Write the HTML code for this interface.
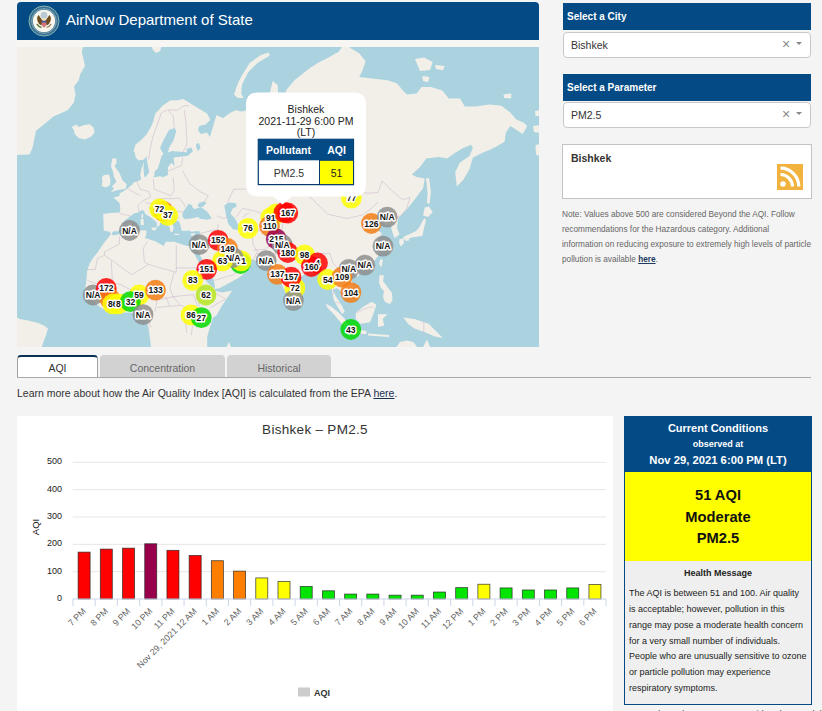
<!DOCTYPE html><html><head><meta charset="utf-8"><style>
*{margin:0;padding:0;box-sizing:border-box}
html,body{width:822px;height:711px;overflow:hidden;background:#f4f4f4;font-family:"Liberation Sans",sans-serif;color:#333;position:relative}
.abs{position:absolute}
.hdr{left:17px;top:2px;width:522px;height:38px;background:#044b86;border-radius:4px 4px 0 0}
.hdr .t{position:absolute;left:49px;top:9px;font-size:15px;color:#fff;line-height:18px;white-space:nowrap}
.ph{left:563px;width:248px;height:27px;background:#044b86;color:#fff;font-weight:bold;font-size:10px;padding-left:4px;line-height:27px}
.sel{left:563px;width:248px;height:26px;background:#fff;border:1px solid #c8c8c8;border-radius:4px;font-size:10.5px;line-height:24px;padding-left:7px;color:#333}
.sel .x{position:absolute;left:218px;top:-1.5px;font-size:14px;color:#888}
.sel .ar{position:absolute;left:232px;top:9px;width:0;height:0;border-left:3.5px solid transparent;border-right:3.5px solid transparent;border-top:3.5px solid #888}
.info{left:562px;top:144px;width:250px;height:55px;background:#fff;border:1px solid #c3c3c3}
.note{left:562px;top:206.7px;width:256px;font-size:8.25px;line-height:15px;color:#666;white-space:nowrap}
.tab{top:355px;height:22px;border-radius:4px 4px 0 0;font-size:10.5px;text-align:center;line-height:26px;color:#666;background:#d2d2d2}
.learn{left:17px;top:385.8px;font-size:10.5px;color:#333;white-space:nowrap;line-height:14px}
.chart{left:17px;top:416px;width:596px;height:295px;background:#fff}
.cc{left:624px;top:416px;width:188px;height:289px;border:1px solid #044b86;background:#efefef}
</style></head><body>
<div class="abs hdr"><svg class="abs" style="left:11px;top:3px" width="32" height="32" viewBox="0 0 32 32"><circle cx="16" cy="16" r="15" fill="#3b6d96" stroke="#86b9b0" stroke-width="1"/><circle cx="16" cy="16" r="12.4" fill="none" stroke="#8dbdb5" stroke-width="0.8"/><circle cx="16" cy="16" r="11.2" fill="#f6f5ee"/><circle cx="16" cy="10.2" r="3.4" fill="#b9cad2"/><path d="M14.5 15.5 L10.5 10 Q8.5 12 9.5 16 Q10.5 19.5 13.5 20.5Z" fill="#6e4c1f"/><path d="M17.5 15.5 L21.5 10 Q23.5 12 22.5 16 Q21.5 19.5 18.5 20.5Z" fill="#6e4c1f"/><path d="M9 19 q1.5 3 4.5 3.5" stroke="#5d7a3a" stroke-width="1.6" fill="none"/><path d="M23 19 q-1.5 3 -4.5 3.5" stroke="#8a7a50" stroke-width="1.2" fill="none"/><path d="M13.8 15.8 h4.4 v3.5 q0 2.6 -2.2 3.4 q-2.2 -0.8 -2.2 -3.4z" fill="#d4727a"/><path d="M13.8 15.8 h4.4 v1.8 h-4.4z" fill="#3d5a96"/><circle cx="16" cy="14.3" r="1.3" fill="#e8dcb0"/></svg><div class="t">AirNow Department of State</div></div>
<div class="abs" style="left:17px;top:40px;width:522px;height:7px;background:#f7f6f3"></div>
<div class="abs" id="map" style="left:17px;top:47px;width:522px;height:300px;background:#aad3df;overflow:hidden"><svg width="522" height="300" style="position:absolute;left:0;top:0;font-family:'Liberation Sans',sans-serif"><rect width="522" height="300" fill="#aad3df"/><g fill="#f2efe9"><path d="M-2.0 -2.0 L66.4 -2.0 L64.8 4.7 L68.0 19.0 L63.3 26.9 L61.7 33.2 L57.0 39.5 L58.5 47.4 L56.9 55.4 L50.6 63.3 L36.4 69.6 L26.9 77.5 L19.0 83.8 L17.4 91.7 L15.8 100.0 L12.5 107.5 L-2.0 108.0Z"/><path d="M54.6 79.9 L59.3 77.5 L61.7 79.9 L66.4 78.3 L72.7 77.2 L76.7 80.7 L77.5 85.4 L74.3 89.4 L68.0 92.5 L61.7 90.9 L57.7 87.0 L56.9 83.0Z"/><path d="M95.3 111.6 L99.6 111.6 L99.5 116.0 L97.5 119.0 L100.0 122.4 L102.6 126.3 L105.4 133.2 L109.6 137.3 L108.8 141.8 L101.0 143.0 L93.8 145.2 L97.0 141.5 L94.9 139.6 L99.6 134.5 L97.0 130.0 L96.0 125.0 L94.0 119.0Z"/><path d="M87.0 128.0 L92.0 127.5 L93.5 133.0 L93.0 138.0 L89.0 140.6 L84.6 139.0 L85.5 134.0 L84.8 130.0Z"/><path d="M134.0 -2.0 L145.0 -2.0 L143.0 4.0 L139.0 6.0 L136.0 3.0Z"/><path d="M217.0 47.4 L220.8 36.5 L224.9 28.5 L232.8 15.8 L243.9 7.9 L251.8 5.5 L252.6 8.7 L240.7 15.8 L231.2 25.3 L225.0 37.4 L224.2 46.7 L226.7 51.0 L220.8 51.0Z"/><path d="M398.0 12.0 L407.0 10.5 L415.7 15.0 L413.0 23.0 L403.0 24.0Z"/><path d="M418.0 18.0 L427.7 19.0 L426.0 23.3 L419.0 22.0Z"/><path d="M405.3 29.0 L412.5 30.0 L411.0 35.3 L406.0 34.0Z"/><path d="M486.5 47.5 L494.4 46.4 L494.0 51.4 L487.0 51.0Z"/><path d="M518.0 64.0 L524.0 63.0 L524.0 69.0 L518.5 69.0Z"/><path d="M516.0 79.0 L524.0 78.0 L524.0 86.0 L517.0 85.0Z"/><path d="M518.5 98.0 L524.0 97.0 L524.0 109.0 L519.0 108.0Z"/><path d="M134.2 302.0 L132.6 287.9 L131.0 278.4 L129.4 272.1 L126.0 269.0 L121.5 267.3 L113.0 265.5 L105.7 265.8 L97.0 264.5 L89.9 264.2 L83.0 260.0 L78.8 256.3 L73.0 251.0 L67.7 245.2 L69.3 234.1 L70.1 224.6 L72.5 216.7 L76.0 211.0 L80.4 205.7 L86.7 196.2 L91.0 191.0 L94.0 187.0 L92.6 184.8 L86.8 183.5 L86.6 179.1 L86.5 173.0 L86.2 167.1 L93.0 166.0 L102.6 165.6 L103.4 161.2 L102.5 156.0 L96.4 150.5 L102.6 149.0 L102.6 146.4 L110.0 142.1 L115.6 137.3 L116.2 135.7 L124.1 132.8 L123.3 127.5 L124.4 122.3 L127.1 114.4 L126.5 121.0 L127.0 128.0 L128.0 130.7 L132.3 125.2 L130.1 114.4 L129.4 109.0 L127.0 112.5 L121.6 113.5 L118.7 110.4 L117.9 106.0 L116.6 104.5 L118.3 97.8 L123.9 93.3 L129.5 87.6 L134.0 79.8 L136.5 74.0 L138.0 67.0 L145.8 58.5 L153.0 53.5 L161.2 53.3 L166.4 52.0 L174.3 57.0 L182.2 61.7 L190.1 66.4 L193.3 72.8 L188.5 77.5 L182.2 79.1 L181.0 83.0 L183.8 87.0 L190.0 85.5 L193.0 90.0 L195.0 83.0 L197.0 76.0 L199.6 68.0 L205.9 71.2 L213.0 66.0 L218.6 63.3 L225.0 64.6 L229.0 63.5 L238.0 59.0 L245.0 53.0 L251.0 48.0 L253.1 45.0 L255.7 34.0 L260.8 38.2 L261.0 45.0 L265.0 52.0 L268.0 48.0 L269.5 42.7 L277.4 33.2 L291.6 22.1 L301.1 15.8 L310.6 11.1 L321.7 4.7 L326.4 -2.0 L332.8 -2.0 L332.8 0.8 L342.2 6.3 L348.6 14.2 L345.4 23.7 L342.2 30.0 L354.9 31.6 L370.7 33.2 L380.2 36.4 L386.5 44.3 L390.0 47.4 L399.6 46.6 L404.5 40.1 L414.1 40.1 L425.3 43.4 L431.8 51.4 L443.0 51.4 L447.8 59.4 L459.0 59.4 L470.3 57.8 L473.0 57.6 L484.3 58.8 L493.3 65.5 L498.9 72.3 L506.8 75.7 L510.2 79.0 L505.7 86.9 L498.9 82.4 L493.3 79.0 L488.8 85.8 L487.6 94.8 L479.8 99.3 L473.0 102.7 L465.5 105.8 L455.8 110.7 L452.6 121.9 L446.2 133.1 L439.8 139.6 L438.2 125.1 L443.0 115.5 L452.6 109.1 L455.8 101.0 L454.2 97.8 L446.2 101.0 L438.2 105.8 L430.1 111.5 L422.1 109.9 L409.3 111.5 L402.8 120.3 L394.8 127.5 L399.6 129.9 L407.7 131.5 L406.1 141.2 L399.0 150.7 L390.1 162.1 L381.2 171.0 L380.0 181.1 L382.5 187.4 L377.4 191.2 L374.9 183.6 L373.6 177.0 L368.0 178.0 L366.0 174.0 L359.0 175.0 L358.0 181.0 L364.8 186.2 L361.0 193.8 L364.8 199.1 L361.0 209.0 L355.9 216.0 L349.2 220.0 L341.0 221.5 L336.0 223.0 L333.0 229.0 L338.1 243.1 L329.6 249.7 L325.0 245.0 L320.0 241.0 L316.0 243.0 L319.1 249.7 L324.0 257.1 L327.7 264.4 L325.2 266.9 L320.3 259.5 L316.6 252.2 L314.0 238.0 L310.8 233.3 L306.6 227.6 L300.2 219.4 L294.4 220.5 L283.7 230.7 L277.3 240.9 L271.3 251.7 L263.9 235.6 L261.3 227.6 L255.4 223.0 L249.0 214.3 L237.5 213.6 L226.1 208.5 L229.4 216.9 L232.2 219.4 L229.0 225.0 L223.0 230.0 L215.5 234.3 L202.0 241.4 L198.3 241.8 L197.9 243.8 L205.0 245.5 L215.4 243.5 L210.6 250.3 L204.8 259.1 L199.7 268.0 L196.0 270.7 L193.1 279.5 L190.2 289.7 L190.2 302.0Z"/></g><g fill="#aad3df"><path d="M94.5 186.5 L96.6 184.3 L101.3 184.3 L104.0 181.2 L106.4 179.1 L105.2 176.2 L107.9 173.6 L110.7 171.3 L113.1 169.2 L117.5 166.2 L121.0 165.5 L125.0 163.0 L126.9 163.7 L128.4 167.3 L133.2 169.9 L137.0 173.0 L139.9 175.8 L139.9 180.6 L143.0 178.1 L143.2 174.5 L145.8 176.4 L146.0 175.6 L142.6 173.0 L141.1 170.9 L136.8 169.3 L135.3 165.4 L133.4 163.7 L132.2 160.0 L136.0 159.3 L141.5 165.2 L145.2 169.1 L148.0 172.5 L148.2 174.5 L149.7 177.1 L152.9 180.5 L152.9 184.0 L154.6 185.0 L155.7 184.8 L156.6 180.8 L156.2 178.4 L154.9 174.2 L158.0 174.5 L161.3 173.7 L162.4 175.2 L163.9 180.0 L164.6 183.5 L166.4 184.0 L172.1 183.5 L174.3 184.8 L179.8 184.0 L183.2 184.5 L181.7 190.1 L180.2 194.8 L174.9 198.9 L169.8 199.1 L157.2 194.8 L148.7 194.8 L146.6 198.9 L138.3 194.2 L134.2 193.1 L127.6 190.8 L129.1 189.0 L129.5 183.2 L122.6 183.4 L112.4 183.7 L104.8 186.5 L96.0 188.5Z"/><path d="M165.3 169.5 L165.5 166.7 L167.0 163.4 L169.4 160.5 L171.5 156.7 L175.3 158.5 L175.3 160.0 L177.5 162.3 L181.0 161.0 L183.9 160.3 L186.6 162.0 L190.7 165.3 L194.7 171.2 L190.7 172.8 L183.4 172.0 L181.1 170.1 L173.8 171.4 L167.9 172.3Z"/><path d="M180.5 159.5 L182.0 156.0 L187.0 154.5 L189.5 156.0 L186.0 159.5 L183.9 160.3Z"/><path d="M207.3 158.5 L211.4 155.4 L218.7 155.9 L219.7 159.5 L215.6 161.6 L213.5 166.8 L217.6 170.9 L220.8 177.1 L221.3 182.3 L216.6 182.8 L211.4 177.1 L209.4 169.9 L208.3 163.7Z"/><path d="M137.4 128.1 L136.3 130.4 L143.0 129.3 L145.9 130.3 L150.9 128.1 L150.9 120.3 L154.3 115.8 L157.6 118.9 L156.5 110.5 L161.0 110.0 L166.0 109.5 L172.0 108.5 L172.0 105.5 L166.0 105.0 L160.0 104.5 L155.0 104.0 L150.9 105.5 L152.0 101.1 L156.5 93.3 L159.3 84.3 L157.6 80.9 L152.0 83.1 L146.4 93.3 L143.0 101.1 L146.4 106.8 L144.6 109.0 L143.0 114.6 L140.8 121.4 L137.4 124.8Z"/><path d="M169.5 102.0 L174.0 100.5 L176.0 104.0 L173.0 107.0 L170.0 106.0Z"/><path d="M179.0 97.0 L182.0 96.0 L183.5 101.0 L181.0 104.0 L179.5 101.0Z"/><path d="M175.3 201.9 L178.1 208.5 L182.4 216.3 L185.4 226.6 L190.3 235.6 L197.1 241.0 L198.2 242.5 L197.5 237.4 L196.7 232.4 L189.6 222.0 L187.1 216.3 L181.0 204.0 L177.0 202.0Z"/><path d="M208.0 200.4 L214.4 204.4 L220.0 207.0 L226.1 208.5 L226.5 211.0 L222.0 214.9 L217.0 215.0 L215.9 212.6 L212.0 209.0 L208.4 203.2Z"/></g><g fill="#f2efe9"><path d="M109.0 177.5 L112.0 175.5 L115.0 175.5 L114.0 178.5Z"/><path d="M134.5 180.5 L140.0 180.5 L138.5 183.5 L135.0 183.0Z"/><path d="M123.5 172.0 L126.5 172.0 L126.9 178.0 L123.8 178.0Z"/><path d="M124.6 167.0 L126.2 167.0 L126.0 171.0 L124.5 171.0Z"/><path d="M157.5 186.8 L162.5 186.8 L162.0 188.0 L157.5 188.0Z"/><path d="M173.5 187.0 L178.0 186.0 L177.5 188.5 L174.0 188.5Z"/><path d="M409.0 131.5 L412.0 131.0 L414.0 145.0 L412.5 157.0 L410.0 156.0 L410.5 145.0Z"/><path d="M407.7 160.4 L412.0 159.5 L415.7 165.3 L410.9 170.1 L406.1 168.5Z"/><path d="M407.4 171.3 L409.0 173.0 L407.0 181.0 L405.3 189.1 L401.0 189.5 L394.7 190.5 L388.0 192.5 L385.1 192.0 L388.0 189.0 L394.0 186.5 L399.0 184.0 L402.1 180.8 L405.0 175.0Z"/><path d="M382.5 192.0 L386.5 192.0 L387.0 196.0 L384.0 199.5 L382.0 196.0Z"/><path d="M388.0 191.5 L392.5 191.2 L392.0 193.5 L388.5 194.0Z"/><path d="M363.5 212.0 L365.9 213.0 L364.5 220.5 L362.0 217.0Z"/><path d="M337.0 225.5 L342.4 225.0 L341.5 229.5 L338.0 229.0Z"/><path d="M362.5 228.0 L367.0 228.5 L366.0 234.0 L369.0 238.0 L372.0 242.0 L375.0 246.0 L375.5 253.0 L373.0 257.0 L368.0 255.0 L366.0 250.0 L367.0 244.0 L364.0 241.0 L362.0 236.0Z"/><path d="M338.8 265.8 L346.7 259.4 L354.6 254.7 L359.4 257.8 L356.2 267.3 L353.0 275.2 L343.6 276.8 L338.8 272.1Z"/><path d="M308.5 256.5 L314.2 259.5 L321.5 265.6 L327.7 271.8 L331.5 279.0 L329.0 281.0 L321.5 273.0 L316.6 266.9 L310.5 260.7Z"/><path d="M329.6 282.0 L339.0 282.5 L349.9 284.0 L349.0 287.3 L339.0 286.0 L330.0 284.5Z"/><path d="M351.0 286.5 L372.0 288.0 L372.0 290.0 L351.0 288.5Z"/><path d="M361.0 267.3 L370.4 267.3 L365.7 272.1 L367.3 278.4 L361.0 280.0Z"/><path d="M386.3 270.5 L397.3 272.1 L411.6 276.8 L417.9 283.1 L425.8 291.1 L417.9 289.5 L406.8 284.7 L397.3 281.6 L391.0 276.8Z"/><path d="M378.0 302.0 L383.0 295.0 L390.0 293.5 L396.0 295.0 L398.0 297.0 L401.0 302.0Z"/><path d="M405.0 302.0 L410.0 292.5 L414.0 302.0Z"/><path d="M276.5 248.0 L279.5 250.0 L280.5 255.0 L277.5 256.0 L276.0 252.0Z"/><path d="M208.5 302.0 L212.2 294.7 L214.5 302.0Z"/><path d="M-2.0 269.0 L2.5 272.0 L11.5 273.5 L21.0 276.0 L27.0 278.5 L31.0 281.4 L29.0 288.0 L24.0 302.0 L-2.0 302.0Z"/></g><g fill="none" stroke="#c9b4c9" stroke-width="0.6" stroke-opacity="0.9"><path d="M102.4 189.2 L102.4 196.9 L87.4 205.0 L87.4 208.4 L80.4 211.5 L78.3 222.5 L69.7 222.5"/><path d="M87.4 208.4 L95.8 213.9 L108.1 223.2 L114.5 227.7 L131.6 217.4 L127.3 215.1 L126.3 201.4 L130.5 194.4"/><path d="M94.3 213.9 L95.3 233.3 L80.4 237.1 L70.8 233.7"/><path d="M131.6 217.4 L159.3 225.4 L159.3 198.1"/><path d="M159.3 220.9 L184.9 220.9"/><path d="M157.2 225.4 L152.9 241.0 L156.1 249.7 L163.6 258.3 L172.1 261.5"/><path d="M112.4 243.2 L135.9 241.0"/><path d="M139.1 253.0 L157.2 249.7"/><path d="M140.1 260.5 L163.6 258.3"/><path d="M156.1 249.7 L176.4 247.6 L180.7 259.4"/><path d="M197.7 245.4 L208.4 251.9 L193.5 260.5"/><path d="M178.5 271.1 L190.3 279.0"/><path d="M80.4 242.1 L101.7 236.6 L114.5 243.2 L112.4 255.1"/><path d="M99.6 258.3 L99.6 245.4"/><path d="M136.9 241.0 L140.1 253.0 L138.0 264.7"/><path d="M127.3 264.7 L133.7 279.7 L131.6 281.8"/><path d="M167.9 271.1 L170.0 286.1"/><path d="M176.4 271.1 L174.3 288.3"/><path d="M102.2 166.3 L112.8 168.9"/><path d="M123.5 148.7 L119.9 147.1 L111.3 142.1"/><path d="M136.3 132.0 L137.1 142.1 L145.5 145.5 L154.0 148.7"/><path d="M118.8 131.6 L123.1 142.1 L131.6 144.5 L133.7 150.0 L126.3 153.6 L120.9 158.5 L122.0 164.9"/><path d="M128.4 155.8 L135.2 156.7 L141.2 156.7 L152.9 159.8"/><path d="M140.1 152.0 L154.0 151.3"/><path d="M156.1 130.5 L157.2 143.8 L154.0 148.7"/><path d="M174.3 137.6 L182.8 144.5 L191.3 148.7 L187.1 155.1"/><path d="M165.7 124.2 L173.6 138.0"/><path d="M150.8 124.2 L164.7 118.3 L165.7 110.6"/><path d="M165.7 105.9 L170.0 96.9 L168.9 74.4 L167.2 63.0"/><path d="M131.6 112.6 L132.7 103.7 L135.9 89.8 L144.4 65.9 L149.7 63.0"/><path d="M157.2 80.8 L156.1 68.8 L150.8 63.0 L160.4 63.0 L167.2 58.7 L172.1 58.7"/><path d="M152.9 152.0 L162.5 151.0 L168.9 160.4"/><path d="M154.0 164.3 L166.8 164.9"/><path d="M149.7 174.4 L162.5 170.7"/><path d="M146.5 158.2 L147.6 170.1"/><path d="M182.8 186.6 L195.6 183.4 L200.9 182.6 L200.9 177.1"/><path d="M208.4 201.9 L203.1 193.1 L200.9 182.6"/><path d="M183.9 203.6 L187.1 201.9 L195.6 199.4 L206.3 204.3"/><path d="M206.3 204.3 L215.9 215.1 L223.3 219.7 L216.9 227.7 L208.4 230.0 L197.7 233.3"/><path d="M189.2 196.9 L195.6 183.9"/><path d="M236.1 213.9 L240.4 204.3 L236.1 198.1 L235.1 185.3"/><path d="M236.1 203.1 L247.9 202.4 L253.2 198.1 L257.5 191.8 L264.9 183.9"/><path d="M219.1 170.1 L225.5 161.3 L238.3 164.3 L246.8 167.2 L257.5 170.1 L276.7 167.2"/><path d="M235.1 185.3 L246.8 182.6 L257.5 184.5 L264.9 183.9"/><path d="M210.5 155.1 L216.9 142.1 L236.1 142.1 L253.2 127.9 L268.1 131.6 L276.7 142.1 L291.6 148.7"/><path d="M291.6 148.7 L312.9 140.4 L334.3 145.5 L353.5 146.1 L360.9 145.5 L365.2 134.1 L376.9 145.5 L385.5 152.6 L392.9 150.7 L389.7 161.3 L384.4 168.7"/><path d="M291.6 148.7 L310.8 167.2 L330.0 171.5 L344.9 168.1 L353.5 162.2 L360.9 155.1"/><path d="M276.7 167.2 L266.0 175.7 L264.9 183.9"/><path d="M252.1 217.4 L257.5 209.1 L263.9 199.4 L266.0 191.8 L270.3 187.9"/><path d="M270.3 187.9 L274.5 196.9 L278.8 201.9 L293.7 207.9 L302.3 206.7 L312.9 206.3"/><path d="M312.9 206.3 L316.1 216.2 L321.5 222.0 L327.9 219.7 L335.3 222.0"/><path d="M316.1 247.6 L317.2 234.4 L319.3 224.3 L321.5 222.0"/><path d="M294.8 211.5 L303.3 213.9 L303.3 223.2"/><path d="M371.6 175.7 L383.3 168.7"/><path d="M327.9 219.7 L327.9 230.0 L332.1 234.4 L335.3 238.8 L332.1 245.4"/><path d="M324.7 243.2 L330.0 237.7 L332.1 234.4"/><path d="M319.3 255.1 L323.6 256.2"/><path d="M339.6 265.8 L351.3 260.5 L356.7 259.8"/><path d="M406.8 274.5 L406.8 288.3"/><path d="M199.9 168.7 L206.3 171.5 L210.5 170.1"/><path d="M219.1 182.6 L229.7 181.2 L236.1 186.6"/><path d="M225.5 170.1 L231.9 165.7"/><path d="M255.3 172.9 L261.7 175.7"/><path d="M148.7 249.7 L152.9 259.4"/><path d="M180.7 249.7 L182.8 259.4"/></g><g fill-opacity="0.84"><circle cx="112.5" cy="183.5" r="10.4" fill="#8e8e8e"/><circle cx="146.4" cy="164.5" r="10.4" fill="#f57c13"/><circle cx="142.6" cy="162.0" r="10.4" fill="#ffff00"/><circle cx="150.8" cy="168.3" r="10.4" fill="#ffff00"/><circle cx="182.1" cy="197.6" r="10.4" fill="#8e8e8e"/><circle cx="201.2" cy="193.3" r="10.4" fill="#f00"/><circle cx="210.5" cy="201.5" r="10.4" fill="#f57c13"/><circle cx="223.5" cy="216.5" r="10.4" fill="#00d900"/><circle cx="224.2" cy="213.8" r="10.4" fill="#ffff00"/><circle cx="216.0" cy="210.5" r="10.4" fill="#8e8e8e"/><circle cx="205.5" cy="213.8" r="10.4" fill="#ffff00"/><circle cx="189.7" cy="222.3" r="10.4" fill="#f00"/><circle cx="175.7" cy="233.4" r="10.4" fill="#ffff00"/><circle cx="189.0" cy="248.0" r="10.4" fill="#b5e61d"/><circle cx="231.0" cy="181.4" r="10.4" fill="#ffff00"/><circle cx="259.0" cy="167.0" r="10.4" fill="#ffff00"/><circle cx="253.8" cy="170.6" r="10.4" fill="#ffff00"/><circle cx="252.5" cy="179.1" r="10.4" fill="#f57c13"/><circle cx="267.0" cy="165.5" r="10.4" fill="#f00"/><circle cx="270.8" cy="166.0" r="10.4" fill="#f00"/><circle cx="259.3" cy="191.9" r="10.4" fill="#99004c"/><circle cx="265.3" cy="197.8" r="10.4" fill="#8e8e8e"/><circle cx="270.8" cy="205.5" r="10.4" fill="#f00"/><circle cx="287.6" cy="207.8" r="10.4" fill="#ffff00"/><circle cx="300.5" cy="216.0" r="10.4" fill="#f00"/><circle cx="294.4" cy="219.5" r="10.4" fill="#f00"/><circle cx="249.2" cy="213.7" r="10.4" fill="#8e8e8e"/><circle cx="260.4" cy="227.3" r="10.4" fill="#f57c13"/><circle cx="277.9" cy="240.9" r="10.4" fill="#ffff00"/><circle cx="274.0" cy="230.2" r="10.4" fill="#f00"/><circle cx="276.4" cy="253.6" r="10.4" fill="#8e8e8e"/><circle cx="310.7" cy="232.5" r="10.4" fill="#ffff00"/><circle cx="331.8" cy="222.4" r="10.4" fill="#8e8e8e"/><circle cx="347.8" cy="218.2" r="10.4" fill="#8e8e8e"/><circle cx="325.0" cy="230.0" r="10.4" fill="#f57c13"/><circle cx="333.9" cy="245.6" r="10.4" fill="#f57c13"/><circle cx="333.8" cy="282.5" r="10.4" fill="#00d900"/><circle cx="334.4" cy="151.2" r="10.4" fill="#ffff00"/><circle cx="354.4" cy="176.5" r="10.4" fill="#f57c13"/><circle cx="370.2" cy="170.2" r="10.4" fill="#8e8e8e"/><circle cx="366.0" cy="199.2" r="10.4" fill="#8e8e8e"/><circle cx="76.1" cy="248.0" r="10.4" fill="#8e8e8e"/><circle cx="89.3" cy="241.4" r="10.4" fill="#f00"/><circle cx="92.6" cy="251.3" r="10.4" fill="#f57c13"/><circle cx="95.8" cy="256.8" r="10.4" fill="#ffff00"/><circle cx="101.3" cy="256.8" r="10.4" fill="#ffff00"/><circle cx="122.1" cy="248.0" r="10.4" fill="#ffff00"/><circle cx="113.4" cy="254.6" r="10.4" fill="#00d900"/><circle cx="138.5" cy="243.1" r="10.4" fill="#f57c13"/><circle cx="126.0" cy="267.7" r="10.4" fill="#8e8e8e"/><circle cx="174.0" cy="267.8" r="10.4" fill="#ffff00"/><circle cx="184.3" cy="270.7" r="10.4" fill="#00d900"/></g><g font-size="9.5" font-weight="bold" text-anchor="middle" fill="#111" stroke="#fff" stroke-width="3.2" stroke-linejoin="round" paint-order="stroke"><text transform="translate(112.5,186.5) scale(0.9,1)">N/A</text><text transform="translate(142.6,165.0) scale(0.9,1)">72</text><text transform="translate(150.8,171.3) scale(0.9,1)">37</text><text transform="translate(182.1,200.6) scale(0.9,1)">N/A</text><text transform="translate(201.2,196.3) scale(0.9,1)">152</text><text transform="translate(210.5,204.5) scale(0.9,1)">149</text><text transform="translate(224.2,216.8) scale(0.9,1)">71</text><text transform="translate(216.0,213.5) scale(0.9,1)">N/A</text><text transform="translate(205.5,216.8) scale(0.9,1)">63</text><text transform="translate(189.7,225.3) scale(0.9,1)">151</text><text transform="translate(175.7,236.4) scale(0.9,1)">83</text><text transform="translate(189.0,251.0) scale(0.9,1)">62</text><text transform="translate(231.0,184.4) scale(0.9,1)">76</text><text transform="translate(253.8,173.6) scale(0.9,1)">91</text><text transform="translate(252.5,182.1) scale(0.9,1)">110</text><text transform="translate(270.8,169.0) scale(0.9,1)">167</text><text transform="translate(259.3,194.9) scale(0.9,1)">215</text><text transform="translate(265.3,200.8) scale(0.9,1)">N/A</text><text transform="translate(270.8,208.5) scale(0.9,1)">180</text><text transform="translate(287.6,210.8) scale(0.9,1)">98</text><text transform="translate(300.5,219.0) scale(0.9,1)">4</text><text transform="translate(294.4,222.5) scale(0.9,1)">160</text><text transform="translate(249.2,216.7) scale(0.9,1)">N/A</text><text transform="translate(260.4,230.3) scale(0.9,1)">137</text><text transform="translate(277.9,243.9) scale(0.9,1)">72</text><text transform="translate(274.0,233.2) scale(0.9,1)">157</text><text transform="translate(276.4,256.6) scale(0.9,1)">N/A</text><text transform="translate(310.7,235.5) scale(0.9,1)">54</text><text transform="translate(331.8,225.4) scale(0.9,1)">N/A</text><text transform="translate(347.8,221.2) scale(0.9,1)">N/A</text><text transform="translate(325.0,233.0) scale(0.9,1)">109</text><text transform="translate(333.9,248.6) scale(0.9,1)">104</text><text transform="translate(333.8,285.5) scale(0.9,1)">43</text><text transform="translate(334.4,154.2) scale(0.9,1)">77</text><text transform="translate(354.4,179.5) scale(0.9,1)">126</text><text transform="translate(370.2,173.2) scale(0.9,1)">N/A</text><text transform="translate(366.0,202.2) scale(0.9,1)">N/A</text><text transform="translate(76.1,251.0) scale(0.9,1)">N/A</text><text transform="translate(89.3,244.4) scale(0.9,1)">172</text><text transform="translate(95.8,259.8) scale(0.9,1)">86</text><text transform="translate(101.3,259.8) scale(0.9,1)">8</text><text transform="translate(122.1,251.0) scale(0.9,1)">59</text><text transform="translate(113.4,257.6) scale(0.9,1)">32</text><text transform="translate(138.5,246.1) scale(0.9,1)">133</text><text transform="translate(126.0,270.7) scale(0.9,1)">N/A</text><text transform="translate(174.0,270.8) scale(0.9,1)">86</text><text transform="translate(184.3,273.7) scale(0.9,1)">27</text></g><g transform="translate(229.0,45.5)"><path d="M12 0 H108 Q120 0 120 12 V92 Q120 104 108 104 H46 L36.5 112 L27 104 H12 Q0 104 0 92 V12 Q0 0 12 0Z" fill="#fff" filter="url(#sh)"/><text x="60" y="20.3" text-anchor="middle" font-size="10.5" fill="#222" stroke="none">Bishkek</text><text x="60" y="32.4" text-anchor="middle" font-size="10.5" fill="#222">2021-11-29 6:00 PM</text><text x="60" y="43.7" text-anchor="middle" font-size="10.5" fill="#222">(LT)</text><rect x="12.3" y="46.8" width="95.2" height="45.3" fill="#fff" stroke="#063a6b" stroke-width="1.2"/><rect x="12.3" y="46.8" width="95.2" height="21" fill="#044b86"/><rect x="73.5" y="67.8" width="34" height="24.3" fill="#ffff00" stroke="#063a6b" stroke-width="1"/><text x="42.5" y="61.3" text-anchor="middle" font-size="10.5" font-weight="bold" fill="#fff">Pollutant</text><text x="90.5" y="61.3" text-anchor="middle" font-size="10.5" font-weight="bold" fill="#fff">AQI</text><text x="43" y="84" text-anchor="middle" font-size="10.5" fill="#333">PM2.5</text><text x="90.5" y="84" text-anchor="middle" font-size="10.5" fill="#222">51</text></g></svg></div>
<div class="abs ph" style="top:3px">Select a City</div>
<div class="abs sel" style="top:32px">Bishkek<span class="x">×</span><span class="ar"></span></div>
<div class="abs ph" style="top:74px">Select a Parameter</div>
<div class="abs sel" style="top:102px">PM2.5<span class="x">×</span><span class="ar"></span></div>
<div class="abs info"><div class="abs" style="left:8px;top:7px;font-size:10.5px;font-weight:bold;color:#333">Bishkek</div><svg class="abs" style="left:214px;top:19px" width="26" height="26" viewBox="0 0 26 26"><rect width="26" height="26" fill="#f2b23e"/><circle cx="6" cy="20" r="2.8" fill="#fff"/><path d="M3.5 10.5 A12 12 0 0 1 15.5 22.5" stroke="#fff" stroke-width="3.2" fill="none"/><path d="M3.5 4.2 A18.3 18.3 0 0 1 21.8 22.5" stroke="#fff" stroke-width="3.2" fill="none"/></svg></div>
<div class="abs note">Note: Values above 500 are considered Beyond the AQI. Follow<br>recommendations for the Hazardous category. Additional<br>information on reducing exposure to extremely high levels of particle<br>pollution is available <b style="color:#1d3a5f;text-decoration:underline">here</b>.</div>
<div class="abs tab" style="left:17px;width:81px;height:23px;background:#fff;border:1px solid #a0a0a0;border-top:2px solid #0b2f55;color:#333;line-height:23px">AQI</div>
<div class="abs tab" style="left:100px;width:125px">Concentration</div>
<div class="abs tab" style="left:227px;width:104px">Historical</div>
<div class="abs" style="left:17px;top:377px;width:794px;height:1px;background:#a9a9a9"></div>
<div class="abs learn">Learn more about how the Air Quality Index [AQI] is calculated from the EPA <span style="text-decoration:underline;color:#1d3050">here</span>.</div>
<div class="abs chart"><svg width="596" height="295" style="position:absolute;left:0;top:0;font-family:'Liberation Sans',sans-serif"><text x="298" y="17.5" text-anchor="middle" font-size="13.5" letter-spacing="0.3" fill="#333">Bishkek – PM2.5</text><text x="45" y="185.10" text-anchor="end" font-size="9" fill="#1a1a1a">0</text><rect x="55.7" y="155.16" width="533.3" height="1" fill="#e6e6e6"/><text x="45" y="157.76" text-anchor="end" font-size="9" fill="#1a1a1a">100</text><rect x="55.7" y="127.82" width="533.3" height="1" fill="#e6e6e6"/><text x="45" y="130.42" text-anchor="end" font-size="9" fill="#1a1a1a">200</text><rect x="55.7" y="100.48" width="533.3" height="1" fill="#e6e6e6"/><text x="45" y="103.08" text-anchor="end" font-size="9" fill="#1a1a1a">300</text><rect x="55.7" y="73.14" width="533.3" height="1" fill="#e6e6e6"/><text x="45" y="75.74" text-anchor="end" font-size="9" fill="#1a1a1a">400</text><rect x="55.7" y="45.80" width="533.3" height="1" fill="#e6e6e6"/><text x="45" y="48.40" text-anchor="end" font-size="9" fill="#1a1a1a">500</text><text transform="translate(22,111) rotate(-90)" text-anchor="middle" font-size="9.5" fill="#111">AQI</text><rect x="61.11" y="136.11" width="12" height="46.89" fill="#ff0000" stroke="#222" stroke-width="0.8" stroke-opacity="0.8"/><rect x="83.31" y="133.10" width="12" height="49.90" fill="#ff0000" stroke="#222" stroke-width="0.8" stroke-opacity="0.8"/><rect x="105.53" y="132.15" width="12" height="50.85" fill="#ff0000" stroke="#222" stroke-width="0.8" stroke-opacity="0.8"/><rect x="127.74" y="127.77" width="12" height="55.23" fill="#99004c" stroke="#222" stroke-width="0.8" stroke-opacity="0.8"/><rect x="149.94" y="134.33" width="12" height="48.67" fill="#ff0000" stroke="#222" stroke-width="0.8" stroke-opacity="0.8"/><rect x="172.16" y="139.39" width="12" height="43.61" fill="#ff0000" stroke="#222" stroke-width="0.8" stroke-opacity="0.8"/><rect x="194.37" y="144.72" width="12" height="38.28" fill="#ff7e00" stroke="#222" stroke-width="0.8" stroke-opacity="0.8"/><rect x="216.58" y="155.11" width="12" height="27.89" fill="#ff7e00" stroke="#222" stroke-width="0.8" stroke-opacity="0.8"/><rect x="238.78" y="161.95" width="12" height="21.05" fill="#ffff00" stroke="#222" stroke-width="0.8" stroke-opacity="0.8"/><rect x="261.00" y="165.50" width="12" height="17.50" fill="#ffff00" stroke="#222" stroke-width="0.8" stroke-opacity="0.8"/><rect x="283.21" y="170.42" width="12" height="12.58" fill="#00e400" stroke="#222" stroke-width="0.8" stroke-opacity="0.8"/><rect x="305.42" y="174.80" width="12" height="8.20" fill="#00e400" stroke="#222" stroke-width="0.8" stroke-opacity="0.8"/><rect x="327.62" y="178.08" width="12" height="4.92" fill="#00e400" stroke="#222" stroke-width="0.8" stroke-opacity="0.8"/><rect x="349.84" y="178.08" width="12" height="4.92" fill="#00e400" stroke="#222" stroke-width="0.8" stroke-opacity="0.8"/><rect x="372.05" y="179.17" width="12" height="3.83" fill="#00e400" stroke="#222" stroke-width="0.8" stroke-opacity="0.8"/><rect x="394.25" y="179.17" width="12" height="3.83" fill="#00e400" stroke="#222" stroke-width="0.8" stroke-opacity="0.8"/><rect x="416.47" y="176.03" width="12" height="6.97" fill="#00e400" stroke="#222" stroke-width="0.8" stroke-opacity="0.8"/><rect x="438.68" y="171.63" width="12" height="11.37" fill="#00e400" stroke="#222" stroke-width="0.8" stroke-opacity="0.8"/><rect x="460.88" y="168.24" width="12" height="14.76" fill="#ffff00" stroke="#222" stroke-width="0.8" stroke-opacity="0.8"/><rect x="483.10" y="171.93" width="12" height="11.07" fill="#00e400" stroke="#222" stroke-width="0.8" stroke-opacity="0.8"/><rect x="505.31" y="173.98" width="12" height="9.02" fill="#00e400" stroke="#222" stroke-width="0.8" stroke-opacity="0.8"/><rect x="527.52" y="173.98" width="12" height="9.02" fill="#00e400" stroke="#222" stroke-width="0.8" stroke-opacity="0.8"/><rect x="549.73" y="171.93" width="12" height="11.07" fill="#00e400" stroke="#222" stroke-width="0.8" stroke-opacity="0.8"/><rect x="571.94" y="168.51" width="12" height="14.49" fill="#ffff00" stroke="#222" stroke-width="0.8" stroke-opacity="0.8"/><rect x="55.7" y="182.5" width="533.3" height="1" fill="#ccd6eb"/><rect x="55.50" y="183.0" width="1" height="7" fill="#ccd6eb"/><rect x="77.71" y="183.0" width="1" height="7" fill="#ccd6eb"/><rect x="99.92" y="183.0" width="1" height="7" fill="#ccd6eb"/><rect x="122.13" y="183.0" width="1" height="7" fill="#ccd6eb"/><rect x="144.34" y="183.0" width="1" height="7" fill="#ccd6eb"/><rect x="166.55" y="183.0" width="1" height="7" fill="#ccd6eb"/><rect x="188.76" y="183.0" width="1" height="7" fill="#ccd6eb"/><rect x="210.97" y="183.0" width="1" height="7" fill="#ccd6eb"/><rect x="233.18" y="183.0" width="1" height="7" fill="#ccd6eb"/><rect x="255.39" y="183.0" width="1" height="7" fill="#ccd6eb"/><rect x="277.60" y="183.0" width="1" height="7" fill="#ccd6eb"/><rect x="299.81" y="183.0" width="1" height="7" fill="#ccd6eb"/><rect x="322.02" y="183.0" width="1" height="7" fill="#ccd6eb"/><rect x="344.23" y="183.0" width="1" height="7" fill="#ccd6eb"/><rect x="366.44" y="183.0" width="1" height="7" fill="#ccd6eb"/><rect x="388.65" y="183.0" width="1" height="7" fill="#ccd6eb"/><rect x="410.86" y="183.0" width="1" height="7" fill="#ccd6eb"/><rect x="433.07" y="183.0" width="1" height="7" fill="#ccd6eb"/><rect x="455.28" y="183.0" width="1" height="7" fill="#ccd6eb"/><rect x="477.49" y="183.0" width="1" height="7" fill="#ccd6eb"/><rect x="499.70" y="183.0" width="1" height="7" fill="#ccd6eb"/><rect x="521.91" y="183.0" width="1" height="7" fill="#ccd6eb"/><rect x="544.12" y="183.0" width="1" height="7" fill="#ccd6eb"/><rect x="566.33" y="183.0" width="1" height="7" fill="#ccd6eb"/><rect x="588.54" y="183.0" width="1" height="7" fill="#ccd6eb"/><text transform="translate(69.41,195.80) rotate(-45)" text-anchor="end" font-size="8.9" fill="#666">7 PM</text><text transform="translate(91.61,195.80) rotate(-45)" text-anchor="end" font-size="8.9" fill="#666">8 PM</text><text transform="translate(113.83,195.80) rotate(-45)" text-anchor="end" font-size="8.9" fill="#666">9 PM</text><text transform="translate(136.04,195.80) rotate(-45)" text-anchor="end" font-size="8.9" fill="#666">10 PM</text><text transform="translate(158.25,195.80) rotate(-45)" text-anchor="end" font-size="8.9" fill="#666">11 PM</text><text transform="translate(180.46,195.80) rotate(-45)" text-anchor="end" font-size="8.9" fill="#666">Nov 29, 2021 12 AM</text><text transform="translate(202.67,195.80) rotate(-45)" text-anchor="end" font-size="8.9" fill="#666">1 AM</text><text transform="translate(224.88,195.80) rotate(-45)" text-anchor="end" font-size="8.9" fill="#666">2 AM</text><text transform="translate(247.09,195.80) rotate(-45)" text-anchor="end" font-size="8.9" fill="#666">3 AM</text><text transform="translate(269.30,195.80) rotate(-45)" text-anchor="end" font-size="8.9" fill="#666">4 AM</text><text transform="translate(291.51,195.80) rotate(-45)" text-anchor="end" font-size="8.9" fill="#666">5 AM</text><text transform="translate(313.72,195.80) rotate(-45)" text-anchor="end" font-size="8.9" fill="#666">6 AM</text><text transform="translate(335.93,195.80) rotate(-45)" text-anchor="end" font-size="8.9" fill="#666">7 AM</text><text transform="translate(358.14,195.80) rotate(-45)" text-anchor="end" font-size="8.9" fill="#666">8 AM</text><text transform="translate(380.35,195.80) rotate(-45)" text-anchor="end" font-size="8.9" fill="#666">9 AM</text><text transform="translate(402.56,195.80) rotate(-45)" text-anchor="end" font-size="8.9" fill="#666">10 AM</text><text transform="translate(424.77,195.80) rotate(-45)" text-anchor="end" font-size="8.9" fill="#666">11 AM</text><text transform="translate(446.98,195.80) rotate(-45)" text-anchor="end" font-size="8.9" fill="#666">12 PM</text><text transform="translate(469.19,195.80) rotate(-45)" text-anchor="end" font-size="8.9" fill="#666">1 PM</text><text transform="translate(491.40,195.80) rotate(-45)" text-anchor="end" font-size="8.9" fill="#666">2 PM</text><text transform="translate(513.61,195.80) rotate(-45)" text-anchor="end" font-size="8.9" fill="#666">3 PM</text><text transform="translate(535.82,195.80) rotate(-45)" text-anchor="end" font-size="8.9" fill="#666">4 PM</text><text transform="translate(558.02,195.80) rotate(-45)" text-anchor="end" font-size="8.9" fill="#666">5 PM</text><text transform="translate(580.24,195.80) rotate(-45)" text-anchor="end" font-size="8.9" fill="#666">6 PM</text><rect x="281" y="271.5" width="12" height="9" fill="#ccc"/><text x="297" y="279.8" font-size="9" font-weight="bold" fill="#333">AQI</text></svg></div>
<div class="abs cc"><div class="abs" style="left:-1px;top:-1px;width:188px;height:57px;background:#044b86;color:#fff;font-weight:bold;text-align:center"><div class="abs" style="left:0;width:188px;top:5px;font-size:11px;line-height:14px">Current Conditions</div><div class="abs" style="left:0;width:188px;top:22.4px;font-size:9px;line-height:12px">observed at</div><div class="abs" style="left:0;width:188px;top:37px;font-size:11.25px;line-height:14px">Nov 29, 2021 6:00 PM (LT)</div></div><div class="abs" style="left:0;top:55px;width:186px;height:89px;background:#ffff00;text-align:center;font-weight:bold;color:#111;font-size:14.7px"><div class="abs" style="left:0;width:186px;top:13.9px;line-height:18px">51 AQI</div><div class="abs" style="left:0;width:186px;top:35.6px;line-height:18px">Moderate</div><div class="abs" style="left:0;width:186px;top:57.4px;line-height:18px">PM2.5</div></div><div class="abs" style="left:0;width:186px;top:149.9px;font-size:9px;font-weight:bold;text-align:center;line-height:12px;color:#222">Health Message</div><div class="abs" style="left:4px;top:168.8px;width:184px;font-size:9px;line-height:15.9px;color:#222;white-space:nowrap">The AQI is between 51 and 100. Air quality<br>is acceptable; however, pollution in this<br>range may pose a moderate health concern<br>for a very small number of individuals.<br>People who are unusually sensitive to ozone<br>or particle pollution may experience<br>respiratory symptoms.</div></div>
<div class="abs" style="left:624px;top:707.5px;font-size:9px;color:#444;white-space:nowrap;line-height:12px">Note: Values above 500 are considered Beyond the AQI. Follow</div>
</body></html>
